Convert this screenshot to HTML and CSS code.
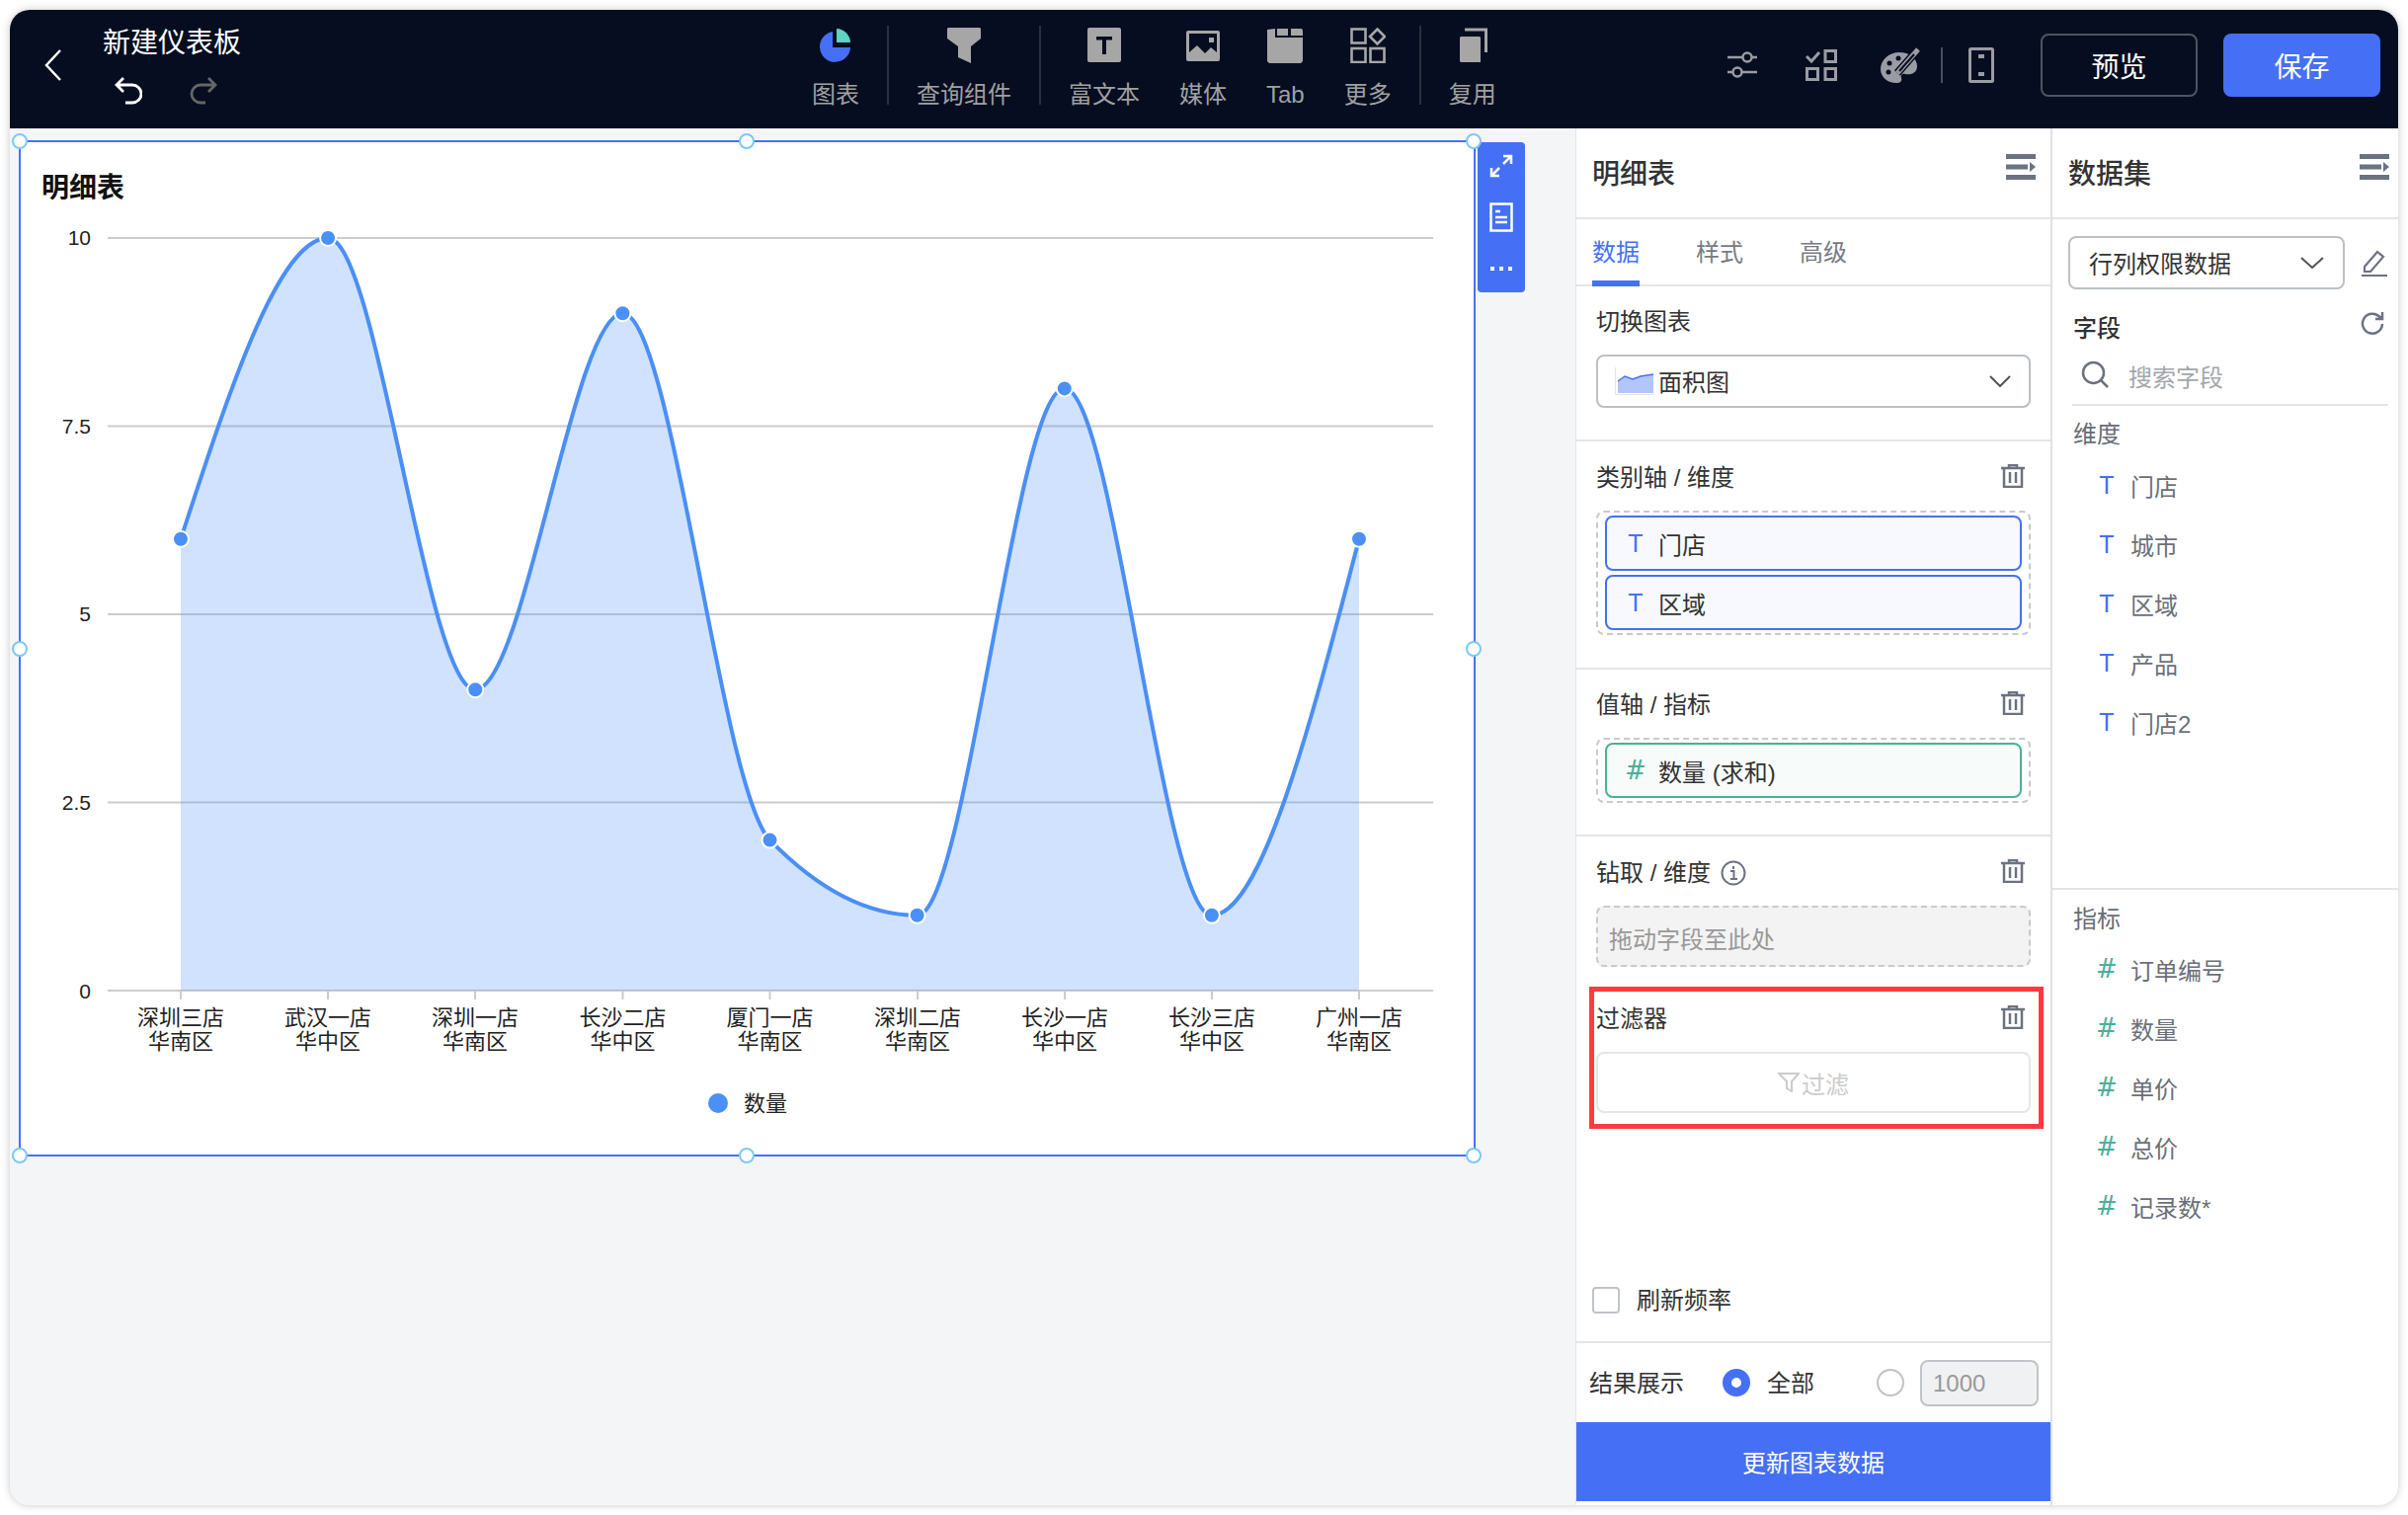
FILE: index.html
```html
<!DOCTYPE html>
<html lang="zh-CN">

<head>
  <meta charset="utf-8">
  <title>新建仪表板</title>
  <link rel="stylesheet" href="styles.css">
</head>

<body>
  <div class="window">
    <header class="head">
      <div class="head-left">
        <svg class="back" width="17" height="32" viewBox="0 0 17 32"><path d="M16 1 2 16l14 15" /></svg>
        <div class="head-title">
          <div class="title">新建仪表板</div>
          <div class="history">
            <svg class="undo" width="28" height="28" viewBox="0 0 28 28"><path d="M9 1 2 8l7 7M2 8h16a9 9 0 0 1 0 18h-7" /></svg>
            <svg class="redo" width="30" height="28" viewBox="0 0 28 28"><path d="M19 1l7 7-7 7M26 8H11a9 9 0 0 0 0 18h5" /></svg>
          </div>
        </div>
      </div>

      <div class="tools">
        <div class="tool">
          <svg width="36" height="36" viewBox="0 0 36 36">
            <path fill="#4570f5" d="M15 4A15.500 15.500 0 1 0 33 20H15Z" />
            <path fill="#5fd3bd" d="M19 1a14.500 14.500 0 0 1 14 14H19Z" />
          </svg>
          <span>图表</span>
        </div>
        <i class="tool-sep"></i>
        <div class="tool">
          <svg width="36" height="36" viewBox="0 0 36 36"><path fill="#a6a6a6" d="M2 0h32l1 1v10L25 19v17l-13-6V19L1 11V1Z" /></svg>
          <span>查询组件</span>
        </div>
        <i class="tool-sep"></i>
        <div class="tool-group">
          <div class="tool">
            <svg width="36" height="36" viewBox="0 0 36 36">
              <rect x="1" y="0" width="34" height="35" rx="2" fill="#a6a6a6" />
              <path fill="#060d20" d="M10 9h16v3.500h-6V27h-4V12.500h-6Z" />
            </svg>
            <span>富文本</span>
          </div>
          <div class="tool">
            <svg width="36" height="36" viewBox="0 0 36 36">
              <rect x="1" y="3" width="34" height="31" rx="2" fill="#a6a6a6" />
              <path fill="#060d20" d="M4 6h28v19l-6-5-6 6-8-8-8 7Z" />
              <rect x="24" y="10" width="5" height="5" fill="#a6a6a6" />
            </svg>
            <span>媒体</span>
          </div>
          <div class="tool">
            <svg width="38" height="36" viewBox="0 0 38 36"><path fill="#a6a6a6" d="M1 2l8-1v9h28v24l-2 2H3l-2-2ZM11 1h11v7H11ZM25 1h11l1 2v5H25Z" /></svg>
            <span>Tab</span>
          </div>
          <div class="tool">
            <svg width="36" height="36" viewBox="0 0 36 36">
              <g fill="none" stroke="#a6a6a6" stroke-width="2.600">
                <rect x="1.500" y="1.500" width="14" height="14" />
                <rect x="1.500" y="21" width="14" height="14" />
                <rect x="20.500" y="21" width="14" height="14" />
                <path d="M27.500 1.500 35 9l-7.500 7.500L20 9Z" />
              </g>
            </svg>
            <span>更多</span>
          </div>
        </div>
        <i class="tool-sep"></i>
        <div class="tool">
          <svg width="36" height="36" viewBox="0 0 36 36">
            <path fill="#a6a6a6" d="M6 9h19l1 1v25H6l-1-1V10Z" />
            <path fill="none" stroke="#a6a6a6" stroke-width="3" d="M10 2h21.500v23" />
          </svg>
          <span>复用</span>
        </div>
      </div>

      <div class="head-right">
        <svg class="ic-sliders" width="30" height="28" viewBox="0 0 30 28">
          <g fill="none" stroke="#9a9ca3" stroke-width="2.500">
            <path d="M0 6h15M25 6h5M0 21h5M15 21h15" />
            <circle cx="20" cy="6" r="4.500" />
            <circle cx="10" cy="21" r="4.500" />
          </g>
        </svg>
        <svg class="ic-layout" width="32" height="32" viewBox="0 0 32 32">
          <g fill="none" stroke="#9a9ca3" stroke-width="3">
            <path d="M1 7l5 5 8-9" />
            <rect x="20" y="1.500" width="10.500" height="11" />
            <rect x="1.500" y="19.500" width="11" height="11" />
            <rect x="20" y="19.500" width="10.500" height="11" />
          </g>
        </svg>
        <svg class="ic-palette" width="40" height="36" viewBox="0 0 40 36">
          <path fill="#9a9ca3" d="M19 5C8 5 0 13 0 22c0 8 7 14 16 14 4 0 6-2 5-5-1-3 1-5 4-4 6 1 12-1 12-8C37 11 29 5 19 5Z" />
          <g fill="#060d20">
            <circle cx="9" cy="16" r="2.500" />
            <circle cx="18" cy="11" r="2.500" />
            <circle cx="8" cy="25" r="2.500" />
          </g>
          <path stroke="#060d20" stroke-width="8" d="M17 26 38 2" />
          <path stroke="#9a9ca3" stroke-width="5" d="M17 26 38 2" />
          <path stroke="#060d20" stroke-width="2" d="M19 24 34 7" />
        </svg>
        <i class="right-sep"></i>
        <svg class="ic-phone" width="26" height="36" viewBox="0 0 26 36">
          <rect x="1.500" y="1.500" width="23" height="33" rx="1" fill="none" stroke="#9a9ca3" stroke-width="3" />
          <path fill="#9a9ca3" d="M10 7h6v4h-6ZM10 25h6v4h-6Z" />
        </svg>
        <button class="btn btn-ghost">预览</button>
        <button class="btn btn-save">保存</button>
      </div>
    </header>

    <div class="main">
      <section class="canvas">
        <div class="widget">
          <h2 class="widget-title">明细表</h2>
          <svg class="chart" width="1471" height="961" viewBox="21 208 1471 961">
            <g stroke="#cccccc" stroke-width="2">
              <path d="M109 241H1451M109 431.500H1451M109 622H1451M109 812.500H1451M109 1003H1451" />
              <path d="M183 1003v9M332 1003v9M481 1003v9M630.500 1003v9M779.500 1003v9M929 1003v9M1078 1003v9M1227 1003v9M1376 1003v9" />
            </g>
            <path class="chart-area" d="M183 545.800C232.700 393.400 282.400 241 332.100 241C381.800 241 431.500 698.200 481.250 698.200C530.900 698.200 580.700 317.200 630.400 317.200C680.100 317.200 729.800 799.800 779.500 850.600C829.200 901.400 878.900 926.800 928.600 926.800C978.300 926.800 1028 393.400 1077.750 393.400C1127.500 393.400 1177.200 926.800 1226.900 926.800C1276.600 926.800 1326.300 736.300 1376 545.800V1003H183Z" />
            <path class="chart-line" d="M183 545.800C232.700 393.400 282.400 241 332.100 241C381.800 241 431.500 698.200 481.250 698.200C530.900 698.200 580.700 317.200 630.400 317.200C680.100 317.200 729.800 799.800 779.500 850.600C829.200 901.400 878.900 926.800 928.600 926.800C978.300 926.800 1028 393.400 1077.750 393.400C1127.500 393.400 1177.200 926.800 1226.900 926.800C1276.600 926.800 1326.300 736.300 1376 545.800" />
            <g class="chart-dots">
              <circle cx="183" cy="545.800" r="8" />
              <circle cx="332.100" cy="241" r="8" />
              <circle cx="481.250" cy="698.200" r="8" />
              <circle cx="630.400" cy="317.200" r="8" />
              <circle cx="779.500" cy="850.600" r="8" />
              <circle cx="928.600" cy="926.800" r="8" />
              <circle cx="1077.750" cy="393.400" r="8" />
              <circle cx="1226.900" cy="926.800" r="8" />
              <circle cx="1376" cy="545.800" r="8" />
            </g>
            <g class="chart-y">
              <text x="92" y="248">10</text>
              <text x="92" y="439">7.5</text>
              <text x="92" y="629">5</text>
              <text x="92" y="820">2.5</text>
              <text x="92" y="1010.500">0</text>
            </g>
            <g class="chart-x">
              <text x="183" y="1038">深圳三店</text><text x="183" y="1062">华南区</text>
              <text x="332" y="1038">武汉一店</text><text x="332" y="1062">华中区</text>
              <text x="481" y="1038">深圳一店</text><text x="481" y="1062">华南区</text>
              <text x="630.500" y="1038">长沙二店</text><text x="630.500" y="1062">华中区</text>
              <text x="779.500" y="1038">厦门一店</text><text x="779.500" y="1062">华南区</text>
              <text x="929" y="1038">深圳二店</text><text x="929" y="1062">华南区</text>
              <text x="1078" y="1038">长沙一店</text><text x="1078" y="1062">华中区</text>
              <text x="1227" y="1038">长沙三店</text><text x="1227" y="1062">华中区</text>
              <text x="1376" y="1038">广州一店</text><text x="1376" y="1062">华南区</text>
            </g>
            <circle cx="727" cy="1117" r="10" fill="#4a90f8" />
            <text class="chart-legend" x="753" y="1125">数量</text>
          </svg>

          <div class="float-bar">
            <svg width="24" height="24" viewBox="0 0 24 24">
              <path d="M14 2h8v8M22 2l-8 8M2 14v8h8M2 22l8-8" />
            </svg>
            <svg class="float-doc" width="24" height="30" viewBox="0 0 24 30">
              <rect x="1.500" y="1.500" width="21" height="27" />
              <path d="M6 9h5M6 15h12M6 20h12" />
            </svg>
            <div class="float-dots"><i></i><i></i><i></i></div>
          </div>

          <i class="handle hd-tl"></i><i class="handle hd-tc"></i><i class="handle hd-tr"></i>
          <i class="handle hd-ml"></i><i class="handle hd-mr"></i>
          <i class="handle hd-bl"></i><i class="handle hd-bc"></i><i class="handle hd-br"></i>
        </div>
      </section>

      <aside class="panel">
        <div class="panel-head">
          <span>明细表</span>
          <svg class="menu-ic" width="30" height="26" viewBox="0 0 30 26"><path d="M0 0h30v5H0ZM0 10.500h22v5H0ZM24 8l6 5-6 5ZM0 21h30v5H0Z" /></svg>
        </div>
        <div class="tabs">
          <span class="tab tab-on">数据</span>
          <span class="tab">样式</span>
          <span class="tab">高级</span>
        </div>

        <div class="sec sec-first">
          <div class="sec-head"><span>切换图表</span></div>
          <div class="select">
            <svg width="40" height="28" viewBox="0 0 40 28">
              <path fill="none" stroke="#e3e4e6" stroke-width="1" d="M.5 0v27.500H40" />
              <path fill="#b3c6fb" d="M3 14l7-5 8 3 8-3 13-2v19H3Z" />
              <path fill="none" stroke="#4570f5" stroke-width="1.500" d="M3 14l7-5 8 3 8-3 13-2" />
            </svg>
            <span class="select-text">面积图</span>
            <svg class="chev" width="22" height="12" viewBox="0 0 22 12"><path d="M1 1l10 10L21 1" /></svg>
          </div>
        </div>

        <div class="sec sec-axis">
          <div class="sec-head">
            <span>类别轴 / 维度</span>
            <svg class="trash" width="24" height="24" viewBox="0 0 24 24"><path d="M0 4h24M8 4V1h8v3M3 4v19h18V4M9 8v11M15 8v11" /></svg>
          </div>
          <div class="drop">
            <div class="chip"><b class="chip-t">T</b>门店</div>
            <div class="chip"><b class="chip-t">T</b>区域</div>
          </div>
        </div>

        <div class="sec">
          <div class="sec-head">
            <span>值轴 / 指标</span>
            <svg class="trash" width="24" height="24" viewBox="0 0 24 24"><path d="M0 4h24M8 4V1h8v3M3 4v19h18V4M9 8v11M15 8v11" /></svg>
          </div>
          <div class="drop">
            <div class="chip chip-num"><b class="chip-n">#</b>数量 (求和)</div>
          </div>
        </div>

        <div class="sec sec-open">
          <div class="sec-head">
            <span class="with-info">钻取 / 维度
              <svg class="info" width="26" height="26" viewBox="0 0 26 26">
                <circle cx="13" cy="13" r="11.500" />
                <path d="M10 11h3.500v8M10 19h7M13 6v3" />
              </svg>
            </span>
            <svg class="trash" width="24" height="24" viewBox="0 0 24 24"><path d="M0 4h24M8 4V1h8v3M3 4v19h18V4M9 8v11M15 8v11" /></svg>
          </div>
          <div class="drag-box">拖动字段至此处</div>
        </div>

        <div class="mark">
          <div class="sec-head">
            <span>过滤器</span>
            <svg class="trash" width="24" height="24" viewBox="0 0 24 24"><path d="M0 4h24M8 4V1h8v3M3 4v19h18V4M9 8v11M15 8v11" /></svg>
          </div>
          <div class="filter-box">
            <svg width="22" height="20" viewBox="0 0 22 20"><path d="M1 1h20l-7 8v10l-5-3V9Z" /></svg>
            <span>过滤</span>
          </div>
        </div>

        <label class="freq"><i class="check"></i>刷新频率</label>

        <div class="result">
          <span class="result-label">结果展示</span>
          <i class="radio radio-on"></i>
          <span class="result-all">全部</span>
          <i class="radio radio-two"></i>
          <span class="result-input">1000</span>
        </div>
        <div class="update">更新图表数据</div>
      </aside>

      <aside class="data">
        <div class="panel-head panel-head-data">
          <span>数据集</span>
          <svg class="menu-ic" width="30" height="26" viewBox="0 0 30 26"><path d="M0 0h30v5H0ZM0 10.500h22v5H0ZM24 8l6 5-6 5ZM0 21h30v5H0Z" /></svg>
        </div>

        <div class="data-top">
          <div class="data-select">
            <div class="select select-data">
              <span class="select-text">行列权限数据</span>
              <svg class="chev" width="24" height="12" viewBox="0 0 24 12"><path d="M1 1l11 10L23 1" /></svg>
            </div>
            <svg class="pencil" width="28" height="28" viewBox="0 0 28 28"><path d="M4 18 17 3l6 5L10 23H4ZM1 27h26" /></svg>
          </div>
          <div class="field-head">
            <span>字段</span>
            <svg class="reload" width="26" height="26" viewBox="0 0 26 26"><path d="M23 13a10 10 0 1 1-3-7.500L23 8M23 1v7h-7" /></svg>
          </div>
          <div class="search">
            <svg class="search-ic" width="28" height="28" viewBox="0 0 28 28"><circle cx="12.500" cy="12.500" r="10.500" /><path d="M20 20l7 7" /></svg>
            <span>搜索字段</span>
          </div>
          <div class="group-name">维度</div>
          <div class="fields">
            <div class="field"><b class="chip-t">T</b>门店</div>
            <div class="field"><b class="chip-t">T</b>城市</div>
            <div class="field"><b class="chip-t">T</b>区域</div>
            <div class="field"><b class="chip-t">T</b>产品</div>
            <div class="field"><b class="chip-t">T</b>门店2</div>
          </div>
        </div>

        <div class="data-bottom">
          <div class="group-name">指标</div>
          <div class="fields">
            <div class="field"><b class="chip-n">#</b>订单编号</div>
            <div class="field"><b class="chip-n">#</b>数量</div>
            <div class="field"><b class="chip-n">#</b>单价</div>
            <div class="field"><b class="chip-n">#</b>总价</div>
            <div class="field"><b class="chip-n">#</b>记录数*</div>
          </div>
        </div>
      </aside>
    </div>
  </div>
</body>

</html>
```

FILE: styles.css
```css
* {
  box-sizing: border-box;
}

html,
body {
  margin: 0;
  height: 100%;
  background: #fff;
  font-family: "Liberation Sans", "Noto Sans CJK SC", sans-serif;
  font-size: 24px;
  color: #333;
}

i {
  font-style: normal;
}

.window {
  margin: 10px;
  width: 2418px;
  height: 1514px;
  border-radius: 20px;
  overflow: hidden;
  background: #fff;
  box-shadow: 0 0 8px rgba(0, 0, 0, .22);
}

/* top bar */
.head {
  height: 120px;
  background: #060d20;
  display: flex;
}

.head-left {
  width: 812px;
  padding-left: 35px;
  display: flex;
  align-items: flex-start;
}

.back {
  margin-top: 40px;
  margin-right: 42px;
  fill: none;
  stroke: #fff;
  stroke-width: 2.500;
}

.head-title {
  padding-top: 14px;
}

.title {
  font-size: 28px;
  line-height: 40px;
  color: #fff;
}

.history {
  margin-top: 14px;
  padding-left: 12px;
  display: flex;
  gap: 47px;
}

.history svg {
  fill: none;
  stroke-width: 2.800;
}

.undo {
  stroke: #fff;
}

.redo {
  stroke: #666;
}

.tools {
  display: flex;
  align-items: flex-start;
}

.tool-group {
  display: flex;
  gap: 40px;
}

.tool {
  padding-top: 18px;
  display: flex;
  flex-direction: column;
  align-items: center;
  color: #a0a0a0;
  line-height: 32px;
  white-space: nowrap;
}

.tool span {
  margin-top: 16px;
}

.tool-sep {
  width: 2px;
  height: 80px;
  margin: 16px 28px 0;
  background: #2b3040;
}

.head-right {
  margin-left: auto;
  padding-right: 18px;
  display: flex;
  align-items: center;
  height: 112px;
}

.ic-layout {
  margin-left: 49px;
}

.ic-palette {
  margin-left: 44px;
}

.right-sep {
  width: 2px;
  height: 36px;
  margin: 0 26px 0 21px;
  background: #4a4e5a;
}

.ic-phone {
  margin-right: 47px;
}

.btn {
  width: 159px;
  height: 64px;
  border-radius: 8px;
  font: inherit;
  font-size: 28px;
  color: #fff;
}

.btn-ghost {
  background: transparent;
  border: 2px solid #50545f;
}

.btn-save {
  margin-left: 26px;
  background: #4570f5;
  border: 0;
}

.main {
  height: 1394px;
  display: flex;
}

/* canvas */
.canvas {
  width: 1585px;
  padding: 12px 0 0 9px;
  background: #f4f5f7;
}

.widget {
  position: relative;
  width: 1475px;
  height: 1029px;
  background: #fff;
  border: 2px solid #4570f5;
}

.widget-title {
  margin: 0 0 -3px;
  padding: 27px 0 0 21px;
  font-size: 28px;
  line-height: 40px;
  font-weight: 700;
  color: #111;
}

.chart {
  display: block;
}

.chart text {
  font-family: "Liberation Sans", "Noto Sans CJK SC", sans-serif;
}

.chart-area {
  fill: rgba(74, 144, 248, .26);
}

.chart-line {
  fill: none;
  stroke: #4a8ff5;
  stroke-width: 4;
}

.chart-dots circle {
  fill: #4a90f8;
  stroke: #fff;
  stroke-width: 2;
}

.chart-y text {
  font-size: 21px;
  fill: #222;
  text-anchor: end;
}

.chart-x text {
  font-size: 22px;
  fill: #222;
  text-anchor: middle;
}

.chart-legend {
  font-size: 22px;
  fill: #222;
}

.float-bar {
  position: absolute;
  top: 0;
  right: -52px;
  width: 48px;
  height: 152px;
  padding-top: 12px;
  display: flex;
  flex-direction: column;
  align-items: center;
  background: #4570f5;
  border-radius: 4px;
}

.float-bar svg {
  fill: none;
  stroke: #fff;
  stroke-width: 2.500;
}

.float-doc {
  margin-top: 25px;
}

.float-dots {
  margin-top: 35px;
  display: flex;
  gap: 5px;
}

.float-dots i {
  width: 4px;
  height: 4px;
  background: #fff;
}

.handle {
  position: absolute;
  width: 16px;
  height: 16px;
  background: #fff;
  border: 2px solid #7cc8f8;
  border-radius: 50%;
}

.hd-tl,
.hd-tc,
.hd-tr {
  top: -9px;
}

.hd-bl,
.hd-bc,
.hd-br {
  bottom: -9px;
}

.hd-ml,
.hd-mr {
  top: calc(50% - 8px);
}

.hd-tl,
.hd-ml,
.hd-bl {
  left: -9px;
}

.hd-tr,
.hd-mr,
.hd-br {
  right: -8px;
}

.hd-tc,
.hd-bc {
  left: calc(50% - 9px);
}

/* config panel */
.panel {
  width: 483px;
  display: flex;
  flex-direction: column;
  border-left: 1px solid #e4e5e7;
  border-right: 2px solid #e0e1e3;
}

.panel-head {
  height: 92px;
  flex: none;
  padding: 0 15px 2px 16px;
  display: flex;
  align-items: center;
  justify-content: space-between;
  border-bottom: 2px solid #e4e5e7;
  font-size: 28px;
  font-weight: 500;
  line-height: 40px;
  color: #333;
}

.panel-head span {
  margin-top: 6px;
}

.panel-head-data {
  padding-right: 9px;
}

.menu-ic {
  margin-top: -10px;
  fill: #6b7280;
}

.tabs {
  height: 68px;
  flex: none;
  padding-left: 16px;
  display: flex;
  gap: 57px;
  border-bottom: 2px solid #e4e5e7;
}

.tab {
  height: 68px;
  line-height: 68px;
  color: #777b82;
}

.tab-on {
  color: #4570f5;
  border-bottom: 6px solid #4570f5;
}

.sec {
  flex: none;
  padding: 16px 20px 32px;
  border-bottom: 2px solid #e4e5e7;
}

.sec-axis {
  padding-top: 17px;
  padding-bottom: 33px;
}

.sec-open {
  padding-top: 17px;
  padding-bottom: 20px;
  border-bottom: 0;
}

.sec-head {
  height: 36px;
  margin-bottom: 17px;
  display: flex;
  align-items: center;
  justify-content: space-between;
  line-height: 36px;
  color: #333;
}

.sec-head span {
  margin-top: 3px;
}

.sec-head .trash {
  margin-right: 6px;
}

.trash {
  fill: none;
  stroke: #6b7280;
  stroke-width: 2.500;
}

.with-info {
  display: flex;
  align-items: center;
  gap: 10px;
}

.info {
  fill: none;
  stroke: #6b7280;
  stroke-width: 2;
}

.select {
  height: 54px;
  padding: 0 18px 0 17px;
  display: flex;
  align-items: center;
  border: 2px solid #bcc0c6;
  border-radius: 8px;
  color: #333;
}

.select-text {
  margin: 3px 0 0 4px;
  line-height: 30px;
}

.chev {
  margin-left: auto;
  fill: none;
  stroke: #555;
  stroke-width: 2;
}

.drop {
  padding: 3px 7px;
  display: flex;
  flex-direction: column;
  gap: 4px;
  border: 2px dashed #c8cacd;
  border-radius: 8px;
}

.chip {
  height: 56px;
  padding-left: 17px;
  display: flex;
  align-items: center;
  background: #f7f9fe;
  border: 2px solid #4570f5;
  border-radius: 8px;
  color: #333;
}

.chip-num {
  background: #f7fbfa;
  border-color: #4caf98;
}

.chip-t,
.chip-n {
  width: 24px;
  margin-right: 11px;
  text-align: center;
  font-weight: 400;
}

.chip-t {
  font-size: 25px;
  color: #4570f5;
}

.chip-n {
  font-family: "DejaVu Sans", sans-serif;
  font-size: 26px;
  color: #4caf98;
}

.drag-box {
  height: 62px;
  padding: 3px 0 0 11px;
  display: flex;
  align-items: center;
  background: #f3f3f3;
  border: 2px dashed #c8cacd;
  border-radius: 8px;
  color: #999;
}

.mark {
  flex: none;
  margin: 0 7px 0 13px;
  padding: 8px 8px 11px 2px;
  border: 5px solid #ff3b3f;
}

.filter-box {
  height: 62px;
  display: flex;
  align-items: center;
  justify-content: center;
  gap: 2px;
  border: 2px solid #e5e6e8;
  border-radius: 8px;
  color: #ccc;
}

.filter-box svg {
  fill: none;
  stroke: #ccc;
  stroke-width: 2;
}

.freq {
  margin-top: auto;
  padding: 0 16px 28px;
  display: flex;
  align-items: center;
  color: #333;
  line-height: 27px;
  border-bottom: 2px solid #e4e5e7;
}

.check {
  width: 28px;
  height: 27px;
  margin-right: 17px;
  border: 2px solid #c0c3c8;
  border-radius: 4px;
}

.result {
  height: 80px;
  flex: none;
  padding-left: 13px;
  display: flex;
  align-items: center;
  color: #333;
}

.result-label {
  width: 96px;
  margin-top: -3px;
}

.radio {
  width: 28px;
  height: 28px;
  margin-left: 39px;
  border: 2px solid #c0c3c8;
  border-radius: 50%;
}

.radio-on {
  border: 9px solid #4570f5;
  background: #fff;
}

.radio-two {
  margin-left: 63px;
}

.result-all {
  width: 48px;
  margin: -3px 0 0 17px;
}

.result-input {
  width: 120px;
  height: 47px;
  margin-left: 16px;
  padding-left: 11px;
  line-height: 43px;
  background: #f0f1f3;
  border: 2px solid #c0c3c8;
  border-radius: 8px;
  color: #999;
}

.update {
  height: 80px;
  flex: none;
  margin-bottom: 4px;
  background: #4570f5;
  color: #fff;
  text-align: center;
  line-height: 83px;
}

/* dataset panel */
.data {
  width: 350px;
  display: flex;
  flex-direction: column;
}

.data-top {
  height: 679px;
  flex: none;
  padding: 17px 8px 0 16px;
  border-bottom: 2px solid #e4e5e7;
}

.data-select {
  display: flex;
  align-items: center;
}

.select-data {
  width: 280px;
  flex: none;
  padding: 0 19px 0 19px;
}

.select-data .select-text {
  margin-left: 0;
}

.pencil {
  margin-left: 16px;
  fill: none;
  stroke: #6b7280;
  stroke-width: 2.200;
}

.field-head {
  height: 36px;
  margin-top: 19px;
  padding: 0 5px 0 5px;
  display: flex;
  align-items: center;
  justify-content: space-between;
  font-weight: 500;
  color: #333;
}

.reload {
  margin-top: -4px;
  fill: none;
  stroke: #6b7280;
  stroke-width: 2.500;
}

.search {
  height: 63px;
  margin: 0 2px 0 4px;
  padding-left: 9px;
  display: flex;
  align-items: center;
  gap: 20px;
  border-bottom: 2px solid #e4e5e7;
  color: #a3a6ab;
}

.search span {
  margin-top: 3px;
}

.group-name {
  height: 36px;
  margin-top: 11px;
  padding-left: 5px;
  line-height: 36px;
  color: #666c75;
}

.search-ic {
  fill: none;
  stroke: #6b7280;
  stroke-width: 2.500;
}

.fields {
  margin-top: 3px;
}

.field {
  height: 60px;
  padding-left: 27px;
  display: flex;
  align-items: center;
  color: #6b7078;
}

.field .chip-t,
.field .chip-n {
  margin-right: 12px;
}

.data-bottom {
  padding: 0 10px 0 16px;
}

.data-bottom .group-name {
  margin-top: 12px;
}

.data-bottom .fields {
  margin-top: 2px;
}
```
